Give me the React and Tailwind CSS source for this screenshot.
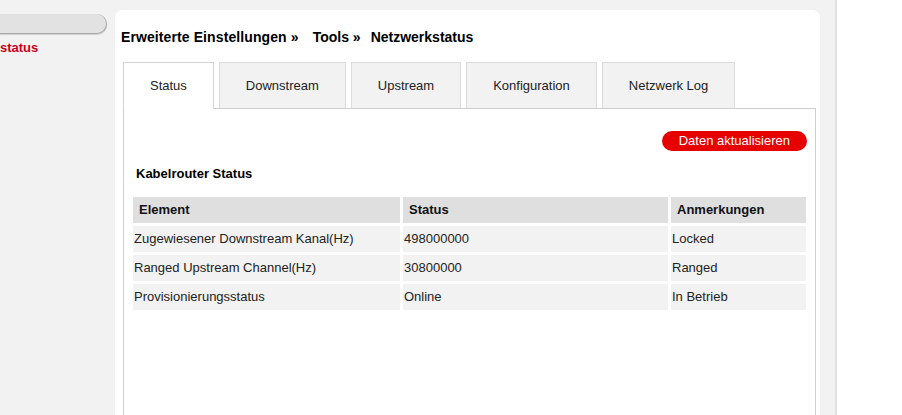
import React from "react";

const tabs = ["Status", "Downstream", "Upstream", "Konfiguration", "Netzwerk Log"];
const rows = [
  ["Zugewiesener Downstream Kanal(Hz)", "498000000", "Locked"],
  ["Ranged Upstream Channel(Hz)", "30800000", "Ranged"],
  ["Provisionierungsstatus", "Online", "In Betrieb"],
];

export default function App() {
  return (
    <div
      className="flex h-[415px] w-[902px] overflow-hidden bg-white text-[13px] text-[#222]"
      style={{ fontFamily: '"Liberation Sans", Arial, sans-serif' }}
    >
      <div className="flex w-[837px] shrink-0 border-r-2 border-[#e2e2e2] bg-[#f2f2f2]">
        {/* sidebar */}
        <div className="w-[115px] shrink-0 pt-[14px]">
          <div className="h-[20px] w-[107px] rounded-r-full border-b border-r border-[#a9a9a9] bg-[#e2e2e2] shadow-[0_1px_1px_rgba(0,0,0,0.15)]" />
          <div className="mt-[6px] text-[13px] font-bold leading-[16px] text-[#c8001e]">status</div>
        </div>
        {/* main panel */}
        <div className="mt-[10px] flex w-[705px] shrink-0 flex-col rounded-t-[8px] bg-white pl-[6px] pt-[19px]">
          <h1 className="flex text-[14px] font-bold leading-[16px] text-black">
            <span className="tracking-[0.1px]">Erweiterte Einstellungen »</span>
            <span className="ml-[14px]">Tools »</span>
            <span className="ml-[10px]">Netzwerkstatus</span>
          </h1>
          <div className="ml-[2px] mr-[4px] mt-[17px] flex flex-col">
            <div className="flex gap-[5px]">
              {tabs.map((t, i) => (
                <div
                  key={t}
                  className={
                    i === 0
                      ? "relative z-10 -mb-px flex h-[47px] items-center border border-b-0 border-[#d4d4d4] bg-white px-[26px] text-[#222]"
                      : "flex h-[46px] items-center border border-b-0 border-[#dcdcdc] bg-[#f2f2f2] px-[26px] text-[#222]"
                  }
                >
                  {t}
                </div>
              ))}
            </div>
            <div className="h-[400px] border border-[#cfcfcf] bg-white">
              <div className="mr-[8px] mt-[22px] flex justify-end">
                <button className="h-[20px] rounded-full bg-[#e60000] px-[17px] text-[13px] leading-[20px] text-white">
                  Daten aktualisieren
                </button>
              </div>
              <div className="ml-[12px] mt-[15px] text-[13px] font-bold leading-[16px] text-black">
                Kabelrouter Status
              </div>
              <div className="ml-[9px] mt-[15px] grid w-[673px] grid-cols-[267px_265px_135px] gap-[3px]">
                {["Element", "Status", "Anmerkungen"].map((h) => (
                  <div key={h} className="flex h-[26px] items-center bg-[#dfdfdf] pl-[6px] font-bold text-[#111]">
                    {h}
                  </div>
                ))}
                {rows.map((r) =>
                  r.map((c, j) => (
                    <div key={r[0] + j} className="flex h-[26px] items-center bg-[#f2f2f2] pl-[1px] text-[#222]">
                      {c}
                    </div>
                  ))
                )}
              </div>
            </div>
          </div>
        </div>
      </div>
      <div className="flex-1 bg-white" />
    </div>
  );
}
